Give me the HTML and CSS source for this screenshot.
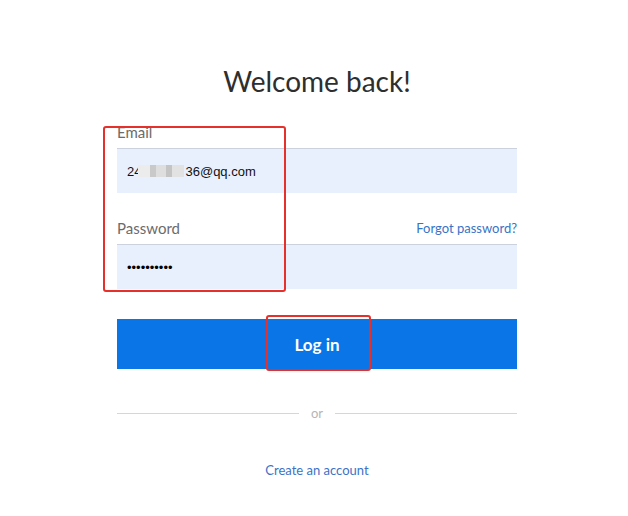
FILE: index.html
```html
<!DOCTYPE html>
<html lang="en">
<head>
  <meta charset="UTF-8">
  <title>Log in</title>
  <link rel="stylesheet" href="styles.css">
</head>
<body>
  <div class="card">
    <h1>Welcome back!</h1>

    <form class="login">
      <label class="field-label" for="email">Email</label>
      <div class="input" id="email">24<span class="masked"></span>36@qq.com</div>

      <div class="label-row">
        <label class="field-label" for="password">Password</label>
        <a class="link small" href="#">Forgot password?</a>
      </div>
      <div class="input dots" id="password">••••••••••</div>

      <button type="button" class="btn-login">Log in</button>
    </form>

    <div class="divider"><span>or</span></div>

    <p class="create"><a class="link" href="#">Create an account</a></p>

    <!-- annotation boxes from the screenshot -->
    <div class="mark mark-fields"></div>
    <div class="mark mark-button"></div>
  </div>
</body>
</html>
```

FILE: styles.css
```css
body {
  margin: 0;
  background: #ffffff;
  font-family: 'Lato', 'Noto Sans', sans-serif;
  color: #333333;
}
.card {
  position: relative;
  width: 400px;
  margin-left: 117px;
  padding-top: 61px;
}
h1 {
  margin: 0 0 21px;
  text-align: center;
  font-size: 28px;
  font-weight: 400;
  line-height: 40px;
  color: #2e2e2e;
}
.field-label {
  display: block;
  font-size: 15px;
  line-height: 20px;
  color: #6b6b6b;
  margin-bottom: 6px;
}
.label-row {
  display: flex;
  justify-content: space-between;
  align-items: flex-end;
  margin-top: 25px;
}
.input {
  height: 45px;
  box-sizing: border-box;
  border-top: 1px solid #cbd2dd;
  background: #e8f0fe;
  padding: 0 10px;
  display: flex;
  align-items: center;
  font-family: 'Liberation Sans', Arial, sans-serif;
  font-size: 13px;
  color: #111111;
}
.input.dots {
  color: #000000;
}
.masked {
  display: inline-block;
  width: 46px;
  height: 12px;
  margin: 0 1px 0 -3px;
  background: linear-gradient(90deg, #ececec 0 12px, #c9c9c9 12px 18px, #dedede 18px 28px, #c4c4c4 28px 34px, #e2e2e2 34px 100%);
}
.link {
  color: #3a73c6;
  text-decoration: none;
}
.link.small {
  font-size: 13px;
  line-height: 20px;
  margin-bottom: 6px;
}
.btn-login {
  display: block;
  width: 100%;
  height: 50px;
  margin-top: 30px;
  border: none;
  background: #0a75e6;
  color: #ffffff;
  font-family: inherit;
  font-size: 17px;
  font-weight: 700;
}
.divider {
  display: flex;
  align-items: center;
  gap: 12px;
  margin-top: 36px;
  color: #b5b5b5;
  font-size: 13px;
}
.divider::before, .divider::after {
  content: "";
  flex: 1;
  height: 1px;
  background: #d6d6d6;
}
.create {
  margin: 41px 0 0;
  text-align: center;
  font-size: 13px;
}
.mark {
  position: absolute;
  border: 2px solid #e5302c;
  border-radius: 3px;
}
.mark-fields {
  left: -14px;
  top: 126px;
  width: 179px;
  height: 162px;
}
.mark-button {
  left: 149px;
  top: 315px;
  width: 101px;
  height: 52px;
}
```
